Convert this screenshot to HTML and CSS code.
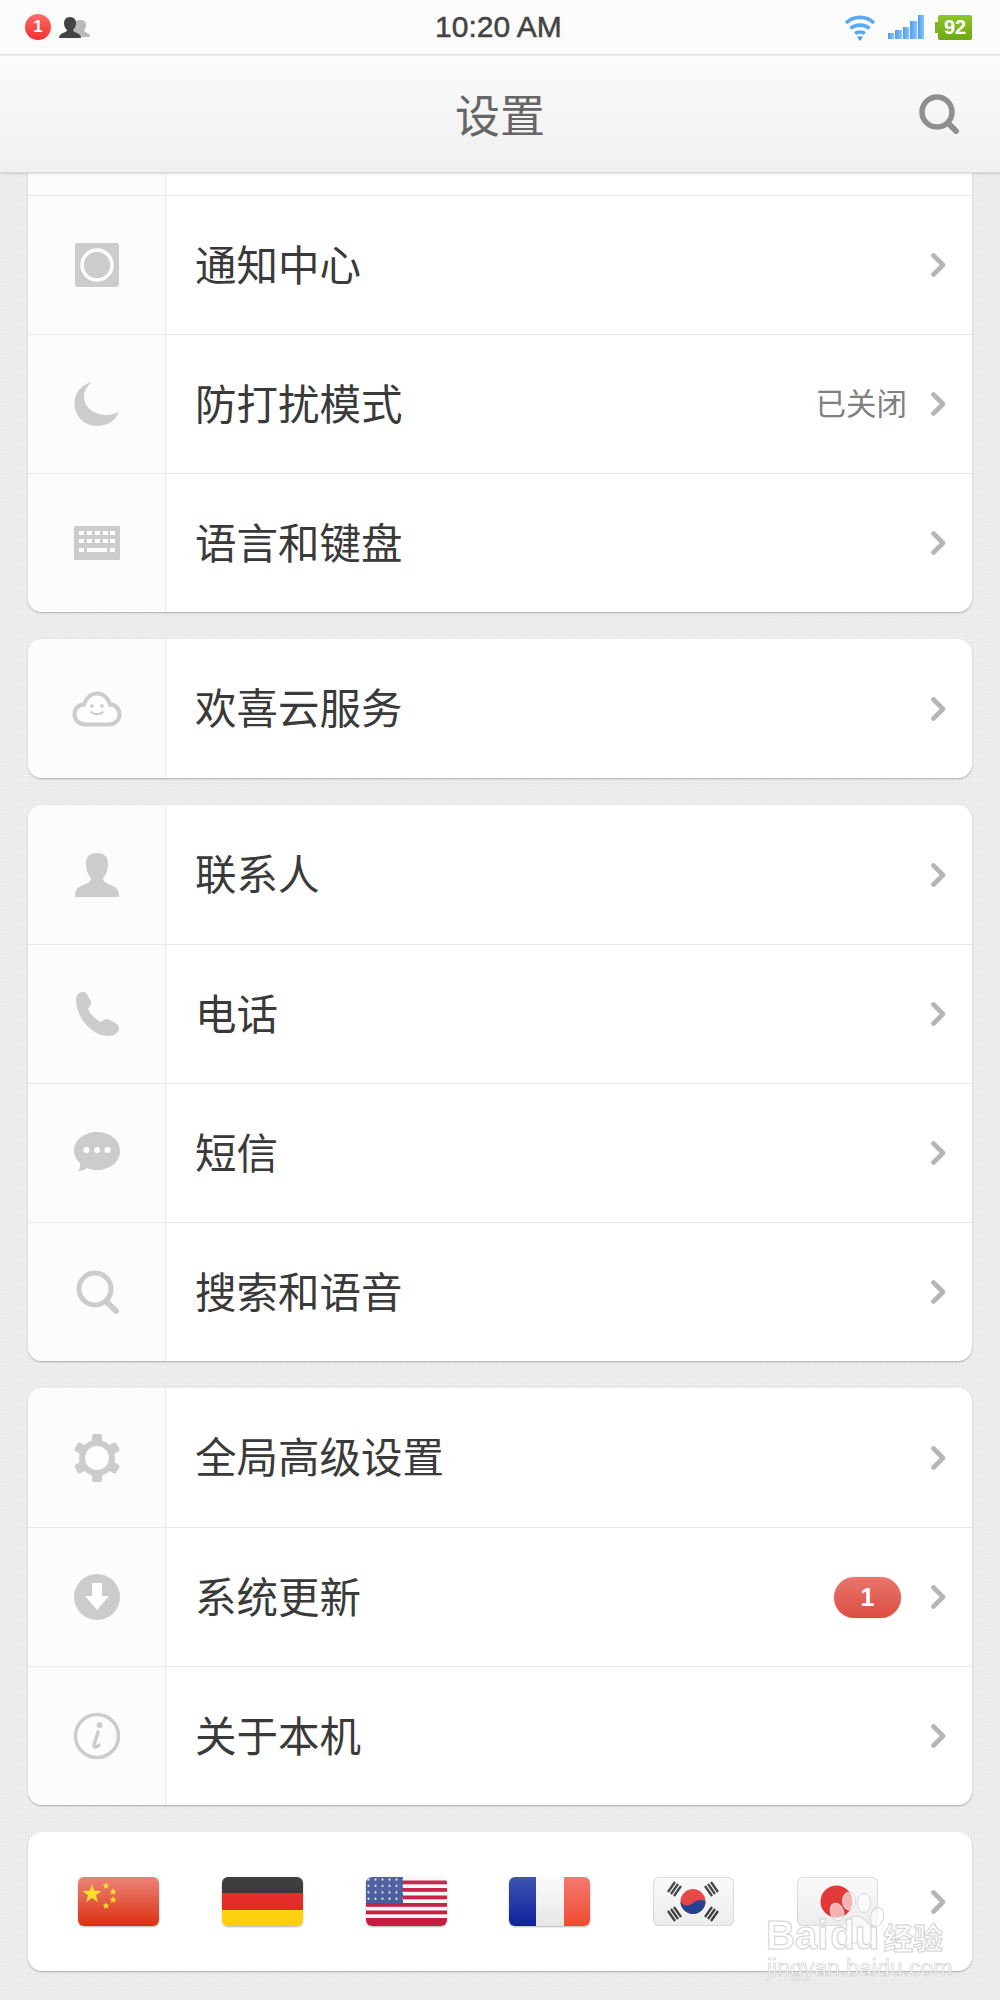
FILE: index.html
```html
<!DOCTYPE html>
<html lang="zh-CN">
<head>
    <meta charset="UTF-8">
    <meta name="viewport" content="width=device-width, initial-scale=1.0">
    <title>设置</title>
    <link rel="stylesheet" href="styles.css">
</head>
<body>
    <svg class="sprite" aria-hidden="true">
        <symbol id="chevron" viewBox="0 0 15 24">
            <path d="M2.5 2.5 L12 12 L2.5 21.5" fill="none" stroke="currentColor" stroke-width="4.6" stroke-linecap="round" stroke-linejoin="round"/>
        </symbol>
    </svg>

    <div class="statusbar">
        <div class="status-left">
            <span class="status-badge">1</span>
            <svg class="status-people" viewBox="0 0 31 21">
                <path fill="#b9b9b9" d="M22 3c3 0 5 2 5 5 0 2-1 4-2 5 0 1 1 2 3 3 2 .6 3 2 3 4H14V5c2-1 5-2 8-2z"/>
                <path fill="#444" d="M11 0c4 0 6 3 6 6 0 3-1 5-3 7 0 1 1 2 4 3 3 1 4 3 4 5H0c0-2 1-4 4-5 3-1 4-2 4-3-2-2-3-4-3-7 0-3 2-6 6-6z"/>
            </svg>
        </div>
        <div class="status-time">10:20 AM</div>
        <div class="status-right">
            <svg class="status-wifi" viewBox="0 0 31 27">
                <g fill="none" stroke="#5aa9f7" stroke-width="3.6">
                    <path d="M1.500 9C9 1.500 22 1.500 29.500 9"/>
                    <path d="M6 14.500C11 10 20 10 25 14.500"/>
                    <path d="M10.500 19.500C13 17.500 18 17.500 20.500 19.500"/>
                </g>
                <path fill="#3f93f2" d="M12.500 22.500h6L15.500 27z"/>
            </svg>
            <div class="status-signal">
                <span class="bar-1"></span>
                <span class="bar-2"></span>
                <span class="bar-3"></span>
                <span class="bar-4"></span>
                <span class="bar-5"></span>
            </div>
            <div class="status-battery"><span>92</span></div>
        </div>
    </div>

    <div class="navbar">
        <div></div>
        <h1>设置</h1>
        <svg class="nav-search" viewBox="0 0 42 40">
            <circle cx="19" cy="18" r="15" fill="none" stroke="#8f8f8f" stroke-width="5.500"/>
            <path d="M30 29 L38 37" stroke="#8f8f8f" stroke-width="6" stroke-linecap="round"/>
        </svg>
    </div>

    <div class="content">
        <div class="card card-cut">
            <div class="row-stub"><div class="cell-icon"></div><div class="cell-main"></div></div>
            <div class="row">
                <div class="cell-icon">
                    <svg class="icon" viewBox="0 0 48 48">
                        <rect x="2" y="2" width="44" height="44" rx="3" fill="#cccccd"/>
                        <circle cx="24" cy="24" r="15" fill="none" stroke="#fff" stroke-width="3.500"/>
                    </svg>
                </div>
                <div class="cell-main">
                    <span class="row-label">通知中心</span>
                    <svg class="chevron"><use href="#chevron"/></svg>
                </div>
            </div>
            <div class="row">
                <div class="cell-icon">
                    <svg class="icon" viewBox="0 0 48 48">
                        <path fill="#cccccd" d="M19 2C7 5 1.500 14 1.500 24c0 12 10 22 22.500 22 10 0 18-5 22-14-4 2-8 3-12 3C22 35 11 28 11 17c0-6 3-11 8-15z"/>
                    </svg>
                </div>
                <div class="cell-main">
                    <span class="row-label">防打扰模式</span>
                    <span class="row-value">已关闭</span>
                    <svg class="chevron"><use href="#chevron"/></svg>
                </div>
            </div>
            <div class="row">
                <div class="cell-icon">
                    <svg class="icon" viewBox="0 0 48 48">
                        <rect x="1" y="7" width="46" height="34" rx="1.500" fill="#cccccd"/>
                        <g fill="#fff">
                            <rect x="6" y="12" width="5" height="4"/><rect x="14" y="12" width="5" height="4"/><rect x="22" y="12" width="5" height="4"/><rect x="30" y="12" width="5" height="4"/><rect x="37" y="12" width="5" height="4"/>
                            <rect x="6" y="20" width="5" height="4"/><rect x="14" y="20" width="5" height="4"/><rect x="22" y="20" width="5" height="4"/><rect x="30" y="20" width="5" height="4"/><rect x="37" y="20" width="5" height="4"/>
                            <rect x="6" y="29" width="5" height="4"/><rect x="14" y="29" width="20" height="4"/><rect x="37" y="29" width="5" height="4"/>
                        </g>
                    </svg>
                </div>
                <div class="cell-main">
                    <span class="row-label">语言和键盘</span>
                    <svg class="chevron"><use href="#chevron"/></svg>
                </div>
            </div>
        </div>

        <div class="card">
            <div class="row">
                <div class="cell-icon">
                    <svg class="icon icon-wide" viewBox="0 0 50 36">
                        <path fill="#fdfdfd" stroke="#cccccd" stroke-width="4" d="M13 33.500C7 33.500 2.500 29 2.500 23.500 2.500 17.500 7 13.500 12 13.500 14 7 19 2.500 25 2.500S36 7 38 13.500C43 13.500 47.500 17.500 47.500 23.500 47.500 29 43 33.500 37 33.500z"/>
                        <circle cx="20" cy="15" r="1.800" fill="#cccccd"/>
                        <circle cx="30" cy="15" r="1.800" fill="#cccccd"/>
                        <path d="M19 21c3 3 9 3 12 0" fill="none" stroke="#cccccd" stroke-width="1.800" stroke-linecap="round"/>
                    </svg>
                </div>
                <div class="cell-main">
                    <span class="row-label">欢喜云服务</span>
                    <svg class="chevron"><use href="#chevron"/></svg>
                </div>
            </div>
        </div>

        <div class="card">
            <div class="row">
                <div class="cell-icon">
                    <svg class="icon" viewBox="0 0 48 48">
                        <path fill="#cccccd" d="M24 2c8 0 11 4 11 11 0 6-2 11-5 14 0 3 2 5 8 7 6 2 8 6 8 12H2c0-6 2-10 8-12 6-2 8-4 8-7-3-3-5-8-5-14C13 6 16 2 24 2z"/>
                    </svg>
                </div>
                <div class="cell-main">
                    <span class="row-label">联系人</span>
                    <svg class="chevron"><use href="#chevron"/></svg>
                </div>
            </div>
            <div class="row">
                <div class="cell-icon">
                    <svg class="icon" viewBox="0 0 48 48">
                        <path fill="#cccccd" d="M3 10C3 5 6 2 10 2c3 0 4 2 6 6 2 3 3 5 1 8l-2 3c2 5 8 11 13 13l3-2c2-2 4-1 8 1 4 2 7 4 7 7 0 5-5 8-11 8C18 46 3 26 3 10z"/>
                    </svg>
                </div>
                <div class="cell-main">
                    <span class="row-label">电话</span>
                    <svg class="chevron"><use href="#chevron"/></svg>
                </div>
            </div>
            <div class="row">
                <div class="cell-icon">
                    <svg class="icon" viewBox="0 0 48 48">
                        <path fill="#cccccd" d="M24 3c13 0 23 8 23 19 0 11-10 19-23 19-4 0-7-.6-10-2-2 2-6 3-9 3 2-2 2-5 2-8-3-3-6-7-6-12C1 11 11 3 24 3z"/>
                        <circle cx="13.500" cy="21" r="3" fill="#fff"/>
                        <circle cx="24" cy="21" r="3" fill="#fff"/>
                        <circle cx="34.500" cy="21" r="3" fill="#fff"/>
                    </svg>
                </div>
                <div class="cell-main">
                    <span class="row-label">短信</span>
                    <svg class="chevron"><use href="#chevron"/></svg>
                </div>
            </div>
            <div class="row">
                <div class="cell-icon">
                    <svg class="icon" viewBox="0 0 48 48">
                        <circle cx="22" cy="21" r="16" fill="none" stroke="#cccccd" stroke-width="5"/>
                        <path d="M33 33 L43 43" stroke="#cccccd" stroke-width="6" stroke-linecap="round"/>
                    </svg>
                </div>
                <div class="cell-main">
                    <span class="row-label">搜索和语音</span>
                    <svg class="chevron"><use href="#chevron"/></svg>
                </div>
            </div>
        </div>

        <div class="card">
            <div class="row">
                <div class="cell-icon">
                    <svg class="icon" viewBox="0 0 48 48">
                        <g fill="#cccccd">
                            <circle cx="24" cy="24" r="18"/>
                            <rect x="19" y="0" width="10" height="10" rx="2"/>
                            <rect x="19" y="38" width="10" height="10" rx="2"/>
                            <rect x="19" y="0" width="10" height="10" rx="2" transform="rotate(60 24 24)"/>
                            <rect x="19" y="0" width="10" height="10" rx="2" transform="rotate(120 24 24)"/>
                            <rect x="19" y="0" width="10" height="10" rx="2" transform="rotate(240 24 24)"/>
                            <rect x="19" y="0" width="10" height="10" rx="2" transform="rotate(300 24 24)"/>
                        </g>
                        <circle cx="24" cy="24" r="12" fill="#fdfdfd"/>
                    </svg>
                </div>
                <div class="cell-main">
                    <span class="row-label">全局高级设置</span>
                    <svg class="chevron"><use href="#chevron"/></svg>
                </div>
            </div>
            <div class="row">
                <div class="cell-icon">
                    <svg class="icon" viewBox="0 0 48 48">
                        <circle cx="24" cy="24" r="23" fill="#cccccd"/>
                        <path fill="#fff" d="M19 10h10v13h7L24 37 12 23h7z"/>
                    </svg>
                </div>
                <div class="cell-main">
                    <span class="row-label">系统更新</span>
                    <span class="row-badge">1</span>
                    <svg class="chevron"><use href="#chevron"/></svg>
                </div>
            </div>
            <div class="row">
                <div class="cell-icon">
                    <svg class="icon" viewBox="0 0 48 48">
                        <circle cx="24" cy="24" r="21.500" fill="none" stroke="#cccccd" stroke-width="3.500"/>
                        <circle cx="26.500" cy="13" r="3" fill="#cccccd"/>
                        <path d="M25 20 L21 33c-.6 2.500 2 3 5 0" fill="none" stroke="#cccccd" stroke-width="3.500" stroke-linecap="round" stroke-linejoin="round"/>
                    </svg>
                </div>
                <div class="cell-main">
                    <span class="row-label">关于本机</span>
                    <svg class="chevron"><use href="#chevron"/></svg>
                </div>
            </div>
        </div>

        <div class="card card-flags">
            <div class="flags">
                <div class="flag flag-cn">
                    <svg viewBox="0 0 81 49">
                        <g fill="#ffde1f">
                            <polygon points="14,7 16.400,13.700 23.500,13.900 17.900,18.200 19.900,25 14,21 8.100,25 10.100,18.200 4.500,13.900 11.600,13.700"/>
                            <polygon points="28,5 29,7.500 31.500,7.700 29.600,9.300 30.200,11.800 28,10.500 25.800,11.800 26.400,9.300 24.500,7.700 27,7.500"/>
                            <polygon points="35,11 36,13.500 38.500,13.700 36.600,15.300 37.200,17.800 35,16.500 32.800,17.800 33.400,15.300 31.500,13.700 34,13.500"/>
                            <polygon points="35,19 36,21.500 38.500,21.700 36.600,23.300 37.200,25.800 35,24.500 32.800,25.800 33.400,23.300 31.500,21.700 34,21.500"/>
                            <polygon points="28,25 29,27.500 31.500,27.700 29.600,29.300 30.200,31.800 28,30.500 25.800,31.800 26.400,29.300 24.500,27.700 27,27.500"/>
                        </g>
                    </svg>
                </div>
                <div class="flag flag-de"><span></span><span></span><span></span></div>
                <div class="flag flag-us">
                    <svg viewBox="0 0 81 49">
                        <defs>
                            <pattern id="us-stars" width="7" height="6.400" patternUnits="userSpaceOnUse">
                                <circle cx="2.500" cy="2.500" r="1.100" fill="#dfe4f3"/>
                            </pattern>
                        </defs>
                        <rect width="81" height="49" fill="#f7f7f7"/>
                        <g fill="#c7193f">
                            <rect y="3.500" width="81" height="3.800"/>
                            <rect y="11" width="81" height="3.800"/>
                            <rect y="18.500" width="81" height="3.800"/>
                            <rect y="26" width="81" height="3.800"/>
                            <rect y="33.500" width="81" height="3.800"/>
                            <rect y="41" width="81" height="8"/>
                        </g>
                        <rect width="37" height="26" fill="#45569a"/>
                        <rect width="37" height="26" fill="url(#us-stars)"/>
                    </svg>
                </div>
                <div class="flag flag-fr"><span></span><span></span><span></span></div>
                <div class="flag flag-kr">
                    <svg viewBox="0 0 81 49">
                        <circle cx="40" cy="24.500" r="12.500" fill="#e5403f"/>
                        <path fill="#1d3c8f" d="M27.500 24.500c3 5 9 5 12.500 1.500s9-4 12.500-1.500a12.500 12.500 0 0 1-25 0z"/>
                        <g stroke="#3c3c3c" stroke-width="2.300">
                            <path d="M15 15 L22 5 M18 17 L25 7 M21 19 L28 9"/>
                            <path d="M52 9 L59 19 M55 7 L62 17 M58 5 L65 15"/>
                            <path d="M15 34 L22 44 M18 32 L25 42 M21 30 L28 40"/>
                            <path d="M52 40 L59 30 M55 42 L62 32 M58 44 L65 34"/>
                        </g>
                    </svg>
                </div>
                <div class="flag flag-jp">
                    <svg viewBox="0 0 81 49">
                        <circle cx="39.500" cy="24.500" r="16" fill="#e22f2f"/>
                    </svg>
                </div>
            </div>
            <svg class="chevron"><use href="#chevron"/></svg>
        </div>
    </div>

    <div class="watermark">
        <svg class="wm-paw" viewBox="0 0 60 56">
            <g fill="#fff" fill-opacity=".62" stroke="#d6d6d6">
                <ellipse cx="9" cy="20" rx="6.500" ry="9" transform="rotate(-20 9 20)"/>
                <ellipse cx="21" cy="9" rx="6.500" ry="9"/>
                <ellipse cx="36" cy="11" rx="6.500" ry="9.500"/>
                <ellipse cx="49" cy="25" rx="6.500" ry="9.500" transform="rotate(15 49 25)"/>
                <path d="M28 24c8 0 12 8 18 14 5 6 1 15-7 15-5 0-7-2-11-2s-7 2-11 2c-8 0-12-8-7-15 6-6 10-14 18-14z"/>
            </g>
        </svg>
        <div class="wm-logo"><span>Bai</span><span class="wm-du">du</span><span class="wm-cn">经验</span></div>
        <div class="wm-url">jingyan.baidu.com</div>
    </div>
</body>
</html>
```

FILE: styles.css
```css
body {
    margin: 0;
    width: 1000px;
    height: 2000px;
    overflow: hidden;
    position: relative;
    font-family: "Noto Sans CJK SC", "Liberation Sans", sans-serif;
    color: #3a3a3a;
    background-color: #e9e9e9;
    background-image:
        repeating-linear-gradient(0deg, rgba(255, 255, 255, 0.2) 0 1px, transparent 1px 3px),
        repeating-linear-gradient(90deg, rgba(255, 255, 255, 0.2) 0 1px, transparent 1px 3px);
}

.sprite {
    display: none;
}

.statusbar {
    height: 55px;
    box-sizing: border-box;
    padding: 0 28px 0 25px;
    display: grid;
    grid-template-columns: 1fr auto 1fr;
    align-items: center;
    background: #fbfbfb;
    border-bottom: 1px solid #e3e3e3;
    box-shadow: 0 1px 0 #ededed;
    position: relative;
    z-index: 3;
}

.status-left {
    display: flex;
    align-items: center;
    gap: 8px;
}

.status-badge {
    width: 26px;
    height: 26px;
    border-radius: 50%;
    background: linear-gradient(#ff6b67, #f0312f);
    color: #fff;
    font: bold 17px/26px "Liberation Sans", sans-serif;
    text-align: center;
}

.status-people {
    width: 31px;
    height: 21px;
}

.status-time {
    font: 30px/54px "Liberation Sans", sans-serif;
    color: #444;
    -webkit-text-stroke: 0.5px #444;
}

.status-right {
    display: flex;
    align-items: center;
    justify-content: flex-end;
}

.status-wifi {
    width: 32px;
    height: 27px;
    margin-right: 12px;
}

.status-signal {
    width: 36px;
    height: 24px;
    display: flex;
    align-items: flex-end;
    gap: 1px;
    margin-right: 14px;
}

.status-signal span {
    flex: 1;
    background: linear-gradient(90deg, #4a9df5, #8cc4fa);
}

.bar-1 { height: 6px; }
.bar-2 { height: 9px; }
.bar-3 { height: 12px; }
.bar-4 { height: 18px; }
.bar-5 { height: 24px; }

.status-battery {
    width: 34px;
    height: 25px;
    border-radius: 2px;
    background: linear-gradient(#8cc62a, #6fa912);
    position: relative;
    color: #fff;
    font: bold 20px/25px "Liberation Sans", sans-serif;
    text-align: center;
}

.status-battery::before {
    content: "";
    position: absolute;
    left: -3px;
    top: 7px;
    width: 3px;
    height: 11px;
    background: #7cb61f;
}

.navbar {
    height: 118px;
    box-sizing: border-box;
    padding: 0 40px;
    display: grid;
    grid-template-columns: 1fr auto 1fr;
    align-items: center;
    background: linear-gradient(#fbfbfb, #f0f0f0);
    border-bottom: 1px solid #d8d8d8;
    box-shadow: 0 1px 2px rgba(0, 0, 0, 0.12);
    position: relative;
    z-index: 2;
}

.navbar h1 {
    margin: 0;
    font-size: 45px;
    font-weight: normal;
    color: #666;
}

.nav-search {
    width: 42px;
    height: 40px;
    justify-self: end;
}

.content {
    padding: 0 28px;
    display: flex;
    flex-direction: column;
    gap: 27px;
}

.card {
    background: #fff;
    border-radius: 14px;
    overflow: hidden;
    box-shadow: 0 1px 2px rgba(0, 0, 0, 0.28);
}

.card-cut {
    border-radius: 0 0 14px 14px;
}

.row,
.row-stub {
    display: flex;
    height: 139px;
    box-sizing: border-box;
    border-top: 1px solid #e9e9e9;
}

.card > .row:first-child {
    border-top: none;
}

.row-stub {
    height: 22px;
    border-top: none;
}

.cell-icon {
    width: 138px;
    flex: none;
    box-sizing: border-box;
    display: flex;
    align-items: center;
    justify-content: center;
    background: #fcfcfc;
    border-right: 1px solid #eaeaea;
}

.icon {
    width: 48px;
    height: 48px;
}

.icon-wide {
    width: 50px;
    height: 36px;
}

.cell-main {
    flex: 1;
    display: flex;
    align-items: center;
    padding: 0 26px 0 29px;
}

.row-label {
    font-size: 41.500px;
    padding-bottom: 5px;
    margin-right: auto;
}

.row-value {
    font-size: 30.500px;
    color: #808080;
    padding-bottom: 4px;
    margin-right: 24px;
}

.row-badge {
    width: 67px;
    height: 41px;
    border-radius: 21px;
    background: linear-gradient(#e9756b, #dc4e42);
    box-shadow: 0 0 1px rgba(150, 30, 20, 0.8);
    color: #fff;
    font: bold 25px/41px "Liberation Sans", sans-serif;
    text-align: center;
    margin-right: 30px;
}

.chevron {
    width: 15px;
    height: 24px;
    flex: none;
    color: #b5b5b5;
}

.card-flags {
    height: 139px;
    display: flex;
    align-items: center;
    padding: 0 26px 0 50px;
}

.flags {
    display: flex;
    gap: 62.800px;
    margin-right: auto;
}

.flag {
    width: 81px;
    height: 49px;
    border-radius: 6px;
    overflow: hidden;
    box-sizing: border-box;
    position: relative;
    box-shadow: 0 1px 2px rgba(0, 0, 0, 0.3);
}

.flag svg {
    display: block;
    width: 81px;
    height: 49px;
}

.flag::after {
    content: "";
    position: absolute;
    inset: 0;
    background: linear-gradient(rgba(255, 255, 255, 0.08), rgba(255, 255, 255, 0));
}

.flag-cn {
    background: linear-gradient(#e9796b, #dc2f10);
}

.flag-de {
    display: flex;
    flex-direction: column;
}

.flag-de span {
    flex: 1;
}

.flag-de span:nth-child(1) { background: #303030; }
.flag-de span:nth-child(2) { background: #e2231f; }
.flag-de span:nth-child(3) { background: #fdd00c; }

.flag-fr {
    display: flex;
}

.flag-fr span:nth-child(1) {
    width: 27px;
    background: linear-gradient(#2e46ad, #0c2199);
}

.flag-fr span:nth-child(2) {
    width: 28px;
    background: linear-gradient(#fbfbfb, #e6e6e6);
}

.flag-fr span:nth-child(3) {
    width: 26px;
    background: linear-gradient(#f46d62, #ef4a30);
}

.flag-kr,
.flag-jp {
    background: linear-gradient(#fafafa, #ececec);
    box-shadow: inset 0 0 0 1px #d9d9d9;
}

.watermark {
    position: absolute;
    left: 766px;
    top: 1892px;
    width: 180px;
    height: 90px;
    color: #fff;
    font-family: "Liberation Sans", sans-serif;
}

.wm-paw {
    position: absolute;
    left: 62px;
    top: 0;
    width: 60px;
    height: 56px;
}

.wm-logo {
    position: absolute;
    left: 0;
    top: 25px;
    font-size: 40px;
    line-height: 37px;
    height: 37px;
    font-weight: bold;
    color: rgba(255, 255, 255, 0.7);
    -webkit-text-stroke: 1px #d2d2d2;
    white-space: nowrap;
}

.wm-du {
    margin-left: 2px;
}

.wm-cn {
    font-family: "Noto Sans CJK SC", sans-serif;
    font-size: 30px;
    margin-left: 4px;
}

.wm-url {
    position: absolute;
    left: 1px;
    top: 64px;
    font-size: 23px;
    line-height: 24px;
    color: rgba(255, 255, 255, 0.75);
    -webkit-text-stroke: 0.7px #cfcfcf;
    white-space: nowrap;
}
```
